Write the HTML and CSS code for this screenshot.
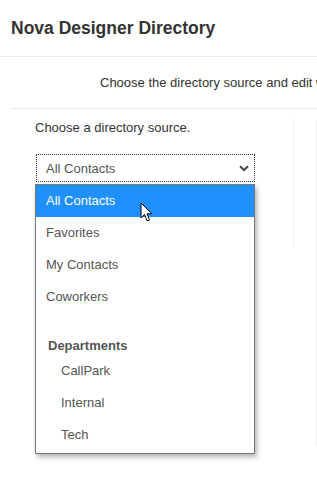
FILE: index.html
```html
<!DOCTYPE html>
<html lang="en">

<head>
  <meta charset="UTF-8">
  <meta name="viewport" content="width=device-width, initial-scale=1.0">
  <title>Nova Designer Directory</title>
  <link rel="stylesheet" href="styles.css">
</head>

<body>
  <div class="header">
    <h1>Nova Designer Directory</h1>
  </div>

  <div class="intro">Choose the directory source and edit which contacts are shown</div>

  <div class="content">
    <div class="source-col">
      <div class="source-label">Choose a directory source.</div>
      <div class="select-wrap">
        <div class="select">
          <span>All Contacts</span>
          <svg class="chevron" width="10" height="7" viewBox="0 0 10 7">
            <path d="M1 1.2 L5 5.2 L9 1.2" fill="none" stroke="#444" stroke-width="2" />
          </svg>
        </div>
        <ul class="dropdown">
          <li class="option selected">All Contacts</li>
          <li class="option">Favorites</li>
          <li class="option">My Contacts</li>
          <li class="option">Coworkers</li>
          <li class="spacer"></li>
          <li class="group-label">Departments</li>
          <li class="option child">CallPark</li>
          <li class="option child">Internal</li>
          <li class="option child">Tech</li>
        </ul>
        <svg class="cursor" width="14" height="21" viewBox="0 0 14 21">
          <path d="M1 1 L1 16 L4.5 12.5 L7.2 19 L9.6 18 L7 11.8 L12 11.8 Z" fill="#fff" stroke="#000" stroke-width="1" stroke-linejoin="round" />
        </svg>
      </div>
    </div>
    <div class="middle-col"></div>
    <div class="side-col"></div>
  </div>
</body>

</html>
```

FILE: styles.css
```css
html {
  overflow: hidden;
}

body {
  margin: 0;
  width: 317px;
  min-height: 482px;
  font-family: "Liberation Sans", Arial, sans-serif;
  font-size: 13px;
  color: #333;
  background: #fff;
}

.header {
  height: 56px;
  padding: 0 11px;
  display: flex;
  align-items: center;
  border-bottom: 1px solid #ececec;
}

.header h1 {
  margin: 0;
  font-size: 17.5px;
  font-weight: bold;
  color: #333;
}

.intro {
  margin-left: 11px;
  height: 51px;
  line-height: 52px;
  padding-left: 89px;
  white-space: nowrap;
  overflow: hidden;
  border-bottom: 1px solid #ececec;
}

.content {
  display: flex;
  padding-left: 35px;
}

.source-col {
  width: 258px;
  padding-top: 11px;
}

.source-label {
  line-height: 16px;
}

.select-wrap {
  position: relative;
  margin-top: 18px;
  width: 219px;
  margin-left: 1px;
}

.select {
  height: 26px;
  padding: 0 9px;
  border: 1px dotted #333;
  display: flex;
  align-items: center;
  justify-content: space-between;
  color: #555;
}

.chevron {
  margin-right: -4px;
}

.dropdown {
  position: absolute;
  top: 30px;
  left: -1px;
  width: 218px;
  margin: 0;
  padding: 0 0 2px;
  list-style: none;
  background: #fff;
  border: 1px solid #767676;
  box-shadow: 2px 3px 5px rgba(0, 0, 0, 0.3);
  z-index: 2;
}

.option {
  height: 32px;
  line-height: 32px;
  padding-left: 10px;
  color: #555;
}

.option.selected {
  background-color: #1e90ff;
  color: #fff;
}

.option.child {
  padding-left: 25px;
}

.spacer {
  height: 24px;
}

.group-label {
  height: 18px;
  line-height: 18px;
  padding-left: 12px;
  font-weight: bold;
  color: #555;
}

.cursor {
  position: absolute;
  left: 104px;
  top: 48px;
  z-index: 3;
}

.middle-col {
  margin-top: 9px;
  height: 129px;
  width: 22px;
  border-left: 1px solid #eee;
}

.side-col {
  margin-top: 11px;
  height: 326px;
  flex: 1;
  border-left: 1px solid #eee;
}
```
